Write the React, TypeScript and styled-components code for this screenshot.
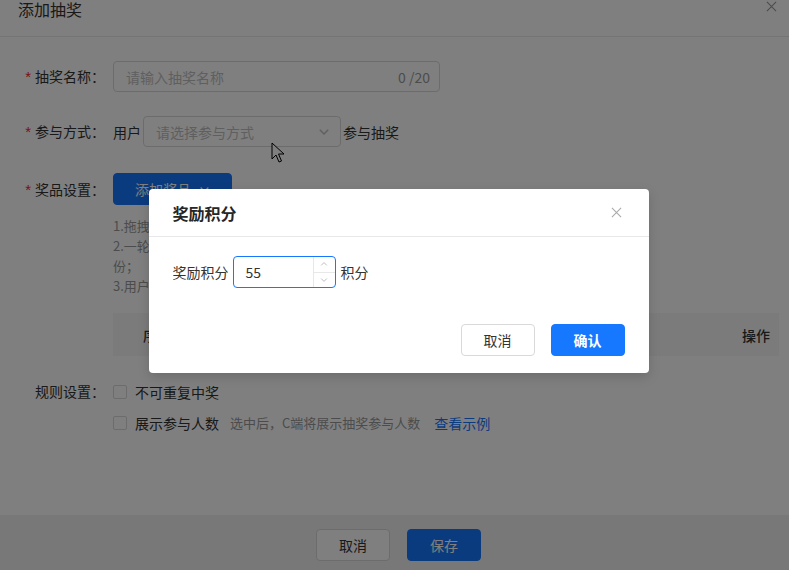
import React from "react";
import styled, { createGlobalStyle } from "styled-components";

const GlobalStyle = createGlobalStyle`
  html, body {
    margin: 0;
    padding: 0;
    background: #fff;
  }
  body {
    font-family: "Noto Sans CJK SC", "Noto Sans", sans-serif;
    font-size: 14px;
    color: #333;
  }
  * {
    box-sizing: border-box;
  }
`;

const Page = styled.div`
  position: relative;
  height: 570px;
  width: 789px;
  overflow: hidden;
  display: flex;
  flex-direction: column;
  background: #fff;
`;

const Header = styled.div`
  height: 37px;
  flex: none;
  display: flex;
  justify-content: space-between;
  align-items: flex-start;
  padding: 0 12px 0 18px;
  border-bottom: 1px solid #e8e8e8;
`;

const PageTitle = styled.div`
  font-size: 16px;
  line-height: 18px;
  color: #333;
`;

const CloseIcon = styled.svg<{ $size: number }>`
  width: ${(p) => p.$size}px;
  height: ${(p) => p.$size}px;
  flex: none;
  display: block;
`;

const PageClose = styled.div`
  padding-top: 1px;
`;

const Body = styled.div`
  flex: 1;
  padding: 24px 10px 0 0;
`;

const FormItem = styled.div<{ $gap?: number }>`
  display: flex;
  align-items: flex-start;
  margin-bottom: ${(p) => p.$gap ?? 24}px;
`;

const Label = styled.div<{ $h?: number }>`
  width: 105px;
  height: ${(p) => p.$h ?? 30}px;
  flex: none;
  margin-right: 8px;
  display: flex;
  align-items: center;
  justify-content: flex-end;
  color: #333;
  white-space: nowrap;
`;

const Star = styled.span`
  color: #f5222d;
  margin-right: 4px;
  font-family: "Liberation Sans", sans-serif;
  font-size: 15px;
  line-height: 1;
`;

const Control = styled.div`
  flex: 1;
  min-width: 0;
`;

const Inline = styled.div`
  display: flex;
  align-items: center;
  height: 31px;
  gap: 2px;
`;

const TextInput = styled.div`
  width: 327px;
  height: 31px;
  border: 1px solid #d9d9d9;
  border-radius: 4px;
  display: flex;
  align-items: center;
  justify-content: space-between;
  padding: 0 9px 0 12px;
`;

const Placeholder = styled.span`
  color: #bfbfbf;
`;

const Counter = styled.span`
  color: #999;
`;

const Select = styled.div`
  width: 198px;
  height: 31px;
  border: 1px solid #d9d9d9;
  border-radius: 4px;
  display: flex;
  align-items: center;
  justify-content: space-between;
  padding: 0 10px 0 12px;
`;

const Button = styled.button<{ $primary?: boolean; $width?: number; $bold?: boolean }>`
  height: 32px;
  width: ${(p) => (p.$width ? `${p.$width}px` : "auto")};
  padding: 0 21px;
  border-radius: 4px;
  font-family: inherit;
  font-size: 14px;
  font-weight: ${(p) => (p.$bold ? 600 : 400)};
  border: 1px solid ${(p) => (p.$primary ? "#1677ff" : "#d9d9d9")};
  background: ${(p) => (p.$primary ? "#1677ff" : "#fff")};
  color: ${(p) => (p.$primary ? "#fff" : "#333")};
  display: inline-flex;
  align-items: center;
  justify-content: center;
  gap: 8px;
  cursor: pointer;
`;

const Hints = styled.div`
  margin-top: 11px;
  max-width: 530px;
  font-size: 13px;
  line-height: 20px;
  color: #999;
`;

const TableHead = styled.div`
  margin-top: 17px;
  height: 43px;
  background: #f7f7f7;
  display: flex;
  align-items: center;
  justify-content: space-between;
  padding: 0 9px 0 30px;
  font-weight: 500;
  color: #333;
`;

const CheckRow = styled.div`
  display: flex;
  align-items: center;
  height: 31px;
  gap: 8px;
`;

const Checkbox = styled.span`
  width: 14px;
  height: 14px;
  border: 1px solid #d9d9d9;
  border-radius: 2px;
  background: #fff;
  flex: none;
`;

const Tip = styled.span`
  font-size: 13px;
  color: #999;
  margin-left: 3px;
`;

const Link = styled.a`
  color: #1677ff;
  text-decoration: none;
  margin-left: 6px;
`;

const Footer = styled.div`
  height: 55px;
  flex: none;
  background: #f0f0f0;
  display: flex;
  align-items: center;
  justify-content: center;
  padding: 5px 0 0 8px;
  gap: 17px;
`;

const Mask = styled.div`
  position: absolute;
  inset: 0;
  background: rgba(0, 0, 0, 0.5);
  display: flex;
  justify-content: center;
  align-items: flex-start;
  padding: 189px 0 0 8px;
`;

const Modal = styled.div`
  width: 500px;
  background: #fff;
  border-radius: 4px;
  box-shadow: 0 4px 12px rgba(0, 0, 0, 0.15);
`;

const ModalHeader = styled.div`
  height: 48px;
  display: flex;
  align-items: center;
  justify-content: space-between;
  padding: 0 27px 0 24px;
  border-bottom: 1px solid #e8e8e8;
`;

const ModalTitle = styled.div`
  font-size: 16px;
  font-weight: 600;
  color: #262626;
`;

const ModalBody = styled.div`
  padding: 19px 24px 20px;
  display: flex;
  align-items: center;
  gap: 4px;
`;

const NumberInput = styled.div`
  width: 103px;
  height: 32px;
  border: 1px solid #1677ff;
  border-radius: 4px;
  display: flex;
  overflow: hidden;
`;

const NumberValue = styled.div`
  flex: 1;
  padding-left: 12px;
  line-height: 30px;
  color: #333;
`;

const Stepper = styled.div`
  width: 22px;
  border-left: 1px solid #e8e8e8;
  display: flex;
  flex-direction: column;
`;

const StepButton = styled.div<{ $bottom?: boolean }>`
  flex: 1;
  display: flex;
  align-items: center;
  justify-content: center;
  border-top: ${(p) => (p.$bottom ? "1px solid #e8e8e8" : "none")};
`;

const Unit = styled.span`
  margin-left: 1px;
`;

const ModalFooter = styled.div`
  display: flex;
  justify-content: flex-end;
  gap: 16px;
  padding: 16px 24px 17px;
`;

const Cursor = styled.svg`
  position: absolute;
  left: 271px;
  top: 142px;
  width: 14px;
  height: 22px;
`;

const Chevron = ({ color, dir = "down", size = 10 }: { color: string; dir?: "up" | "down"; size?: number }) => (
  <svg width={size} height={size} viewBox="0 0 10 10" style={{ display: "block" }}>
    <path
      d={dir === "down" ? "M1.5 3.2 L5 6.7 L8.5 3.2" : "M1.5 6.7 L5 3.2 L8.5 6.7"}
      fill="none"
      stroke={color}
      strokeWidth="1.2"
    />
  </svg>
);

const Cross = ({ size, color }: { size: number; color: string }) => (
  <CloseIcon $size={size} viewBox="0 0 12 12">
    <path d="M1 1 L11 11 M11 1 L1 11" stroke={color} strokeWidth="1.2" fill="none" />
  </CloseIcon>
);

export default function App() {
  return (
    <>
      <GlobalStyle />
      <Page>
        <Header>
          <PageTitle>添加抽奖</PageTitle>
          <PageClose>
            <Cross size={11} color="#999" />
          </PageClose>
        </Header>

        <Body>
          <FormItem>
            <Label>
              <Star>*</Star>抽奖名称：
            </Label>
            <Control>
              <TextInput>
                <Placeholder>请输入抽奖名称</Placeholder>
                <Counter>0 /20</Counter>
              </TextInput>
            </Control>
          </FormItem>

          <FormItem $gap={26}>
            <Label>
              <Star>*</Star>参与方式：
            </Label>
            <Control>
              <Inline>
                <span>用户</span>
                <Select>
                  <Placeholder>请选择参与方式</Placeholder>
                  <Chevron color="#bfbfbf" size={12} />
                </Select>
                <span>参与抽奖</span>
              </Inline>
            </Control>
          </FormItem>

          <FormItem $gap={20}>
            <Label $h={32}>
              <Star>*</Star>奖品设置：
            </Label>
            <Control>
              <Button $primary>
                添加奖品
                <Chevron color="#fff" size={11} />
              </Button>
              <Hints>
                <div>1.拖拽奖品可调整奖品展示顺序；</div>
                <div>2.一轮抽奖中所有奖品的中奖概率之和需等于100%，奖品库存不足时将自动发放谢谢参与一份；</div>
                <div>3.用户中奖后奖品将自动发放至用户账户；</div>
              </Hints>
              <TableHead>
                <span>序号</span>
                <span>操作</span>
              </TableHead>
            </Control>
          </FormItem>

          <FormItem>
            <Label>规则设置：</Label>
            <Control>
              <CheckRow>
                <Checkbox />
                <span>不可重复中奖</span>
              </CheckRow>
              <CheckRow>
                <Checkbox />
                <span>展示参与人数</span>
                <Tip>选中后，C端将展示抽奖参与人数</Tip>
                <Link href="#">查看示例</Link>
              </CheckRow>
            </Control>
          </FormItem>
        </Body>

        <Footer>
          <Button $width={74}>取消</Button>
          <Button $primary $width={74}>保存</Button>
        </Footer>

        <Cursor viewBox="0 0 14 22">
          <path d="M1 1 L1 17 L5 13 L8 20 L10.5 19 L7.5 12 L13 12 Z" fill="#fff" stroke="#000" strokeWidth="1" />
        </Cursor>

        <Mask>
          <Modal>
            <ModalHeader>
              <ModalTitle>奖励积分</ModalTitle>
              <Cross size={11} color="#aaa" />
            </ModalHeader>
            <ModalBody>
              <span>奖励积分</span>
              <NumberInput>
                <NumberValue>55</NumberValue>
                <Stepper>
                  <StepButton>
                    <Chevron color="#bbb" dir="up" size={8} />
                  </StepButton>
                  <StepButton $bottom>
                    <Chevron color="#bbb" size={8} />
                  </StepButton>
                </Stepper>
              </NumberInput>
              <Unit>积分</Unit>
            </ModalBody>
            <ModalFooter>
              <Button $width={74}>取消</Button>
              <Button $primary $width={74} $bold>
                确认
              </Button>
            </ModalFooter>
          </Modal>
        </Mask>
      </Page>
    </>
  );
}
